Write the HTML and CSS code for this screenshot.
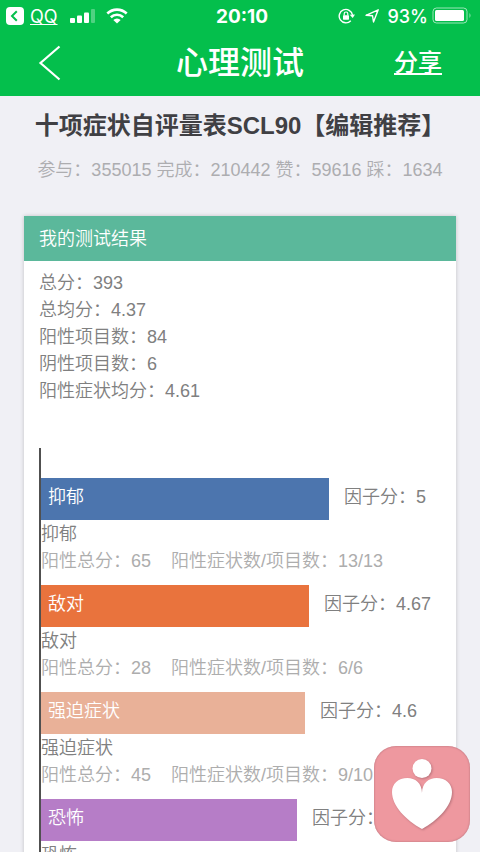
FILE: index.html
```html
<!DOCTYPE html>
<html lang="zh-CN">
<head>
<meta charset="utf-8">
<meta name="viewport" content="width=device-width, initial-scale=1">
<title>心理测试</title>
<link rel="stylesheet" href="styles.css">
</head>
<body>
<header class="top">
  <div class="status">
    <div class="status-side">
      <svg class="back-app" width="18" height="18" viewBox="0 0 18 18" aria-hidden="true"><rect width="18" height="18" rx="4" fill="#fff"/><path d="M10.800 4.200 6 9l4.800 4.800" fill="none" stroke="#04bf4c" stroke-width="2"/></svg>
      <a class="app-link" href="#">QQ</a>
      <svg class="signal" width="26" height="14" viewBox="0 0 26 14" aria-hidden="true"><g fill="#fff"><rect x="0" y="9" width="5" height="5" rx="1"/><rect x="7" y="6.500" width="5" height="7.500" rx="1"/><rect x="14" y="3.500" width="5" height="10.500" rx="1"/><rect x="21" y="0" width="4" height="14" rx="1" opacity=".3"/></g></svg>
      <svg width="22" height="16" viewBox="0 0 22 16" aria-hidden="true"><g fill="none" stroke="#fff" stroke-width="2.600"><path d="M1.300 5.500a14 14 0 0 1 19.400 0"/><path d="M4.800 9.200a9 9 0 0 1 12.400 0"/></g><path d="M11 15.500 7.300 11.900a5.300 5.300 0 0 1 7.400 0z" fill="#fff"/></svg>
    </div>
    <time class="clock">20:10</time>
    <div class="status-side status-right">
      <svg width="18" height="16" viewBox="0 0 18 16" aria-hidden="true"><path d="M12.800 12.700A6.700 6.700 0 1 1 14.500 7" fill="none" stroke="#fff" stroke-width="1.400"/><path d="m11.700 6.800 5.300-.300-2.300 3.500z" fill="#fff"/><rect x="5" y="7.200" width="6" height="4.500" rx=".6" fill="#fff"/><path d="M6.200 7.500V5.800a1.800 1.800 0 0 1 3.600 0v1.700" fill="none" stroke="#fff" stroke-width="1.200"/></svg>
      <svg class="locate" width="14" height="14" viewBox="0 0 14 14" aria-hidden="true"><path d="M13.200.800 8.500 13 7.500 6.700 1 6.300z" fill="none" stroke="#fff" stroke-width="1.400" stroke-linejoin="round"/></svg>
      <span class="percent">93%</span>
      <svg width="40" height="18" viewBox="0 0 40 18" aria-hidden="true"><rect x="1" y="1" width="34" height="15" rx="3.500" fill="none" stroke="#fff" stroke-opacity=".6"/><rect x="3" y="3" width="29" height="11" rx="1.500" fill="#fff"/><path d="M37.500 6q2 2.500 0 5z" fill="#fff" opacity=".6"/></svg>
    </div>
  </div>
  <nav class="nav">
    <button class="back" type="button" aria-label="返回"><svg width="24" height="38" viewBox="0 0 24 38" aria-hidden="true"><path d="M21.500 2.500 2.500 19l19 16.500" fill="none" stroke="#fff" stroke-width="2.200"/></svg></button>
    <h1 class="nav-title">心理测试</h1>
    <a class="share" href="#">分享</a>
  </nav>
</header>
<main class="page">
  <h2 class="title">十项症状自评量表SCL90【编辑推荐】</h2>
  <p class="meta">参与：355015 完成：210442 赞：59616 踩：1634</p>
  <section class="card">
    <h3 class="card-head">我的测试结果</h3>
    <div class="card-body">
      <ul class="summary">
        <li>总分：393</li>
        <li>总均分：4.37</li>
        <li>阳性项目数：84</li>
        <li>阴性项目数：6</li>
        <li>阳性症状均分：4.61</li>
      </ul>
      <div class="chart">
        <article class="factor">
          <div class="bar-row"><div class="bar blue" style="width:72%">抑郁</div><span class="score">因子分：5</span></div>
          <h4 class="name">抑郁</h4>
          <p class="detail"><span>阳性总分：65</span><span>阳性症状数/项目数：13/13</span></p>
        </article>
        <article class="factor">
          <div class="bar-row"><div class="bar orange" style="width:67%">敌对</div><span class="score">因子分：4.67</span></div>
          <h4 class="name">敌对</h4>
          <p class="detail"><span>阳性总分：28</span><span>阳性症状数/项目数：6/6</span></p>
        </article>
        <article class="factor">
          <div class="bar-row"><div class="bar peach" style="width:66%">强迫症状</div><span class="score">因子分：4.6</span></div>
          <h4 class="name">强迫症状</h4>
          <p class="detail"><span>阳性总分：45</span><span>阳性症状数/项目数：9/10</span></p>
        </article>
        <article class="factor">
          <div class="bar-row"><div class="bar purple" style="width:64%">恐怖</div><span class="score">因子分：</span></div>
          <h4 class="name">恐怖</h4>
        </article>
      </div>
    </div>
  </section>
</main>
<button class="heart" type="button" aria-label="心理">
  <svg viewBox="0 0 96 96" aria-hidden="true"><g fill="#fff"><circle cx="48" cy="22.500" r="9.500"/><path d="M48 47C48 37 41 32 33.500 32 24 32 18 38 18 46c0 14 14 28 30 37 16-9 30-23 30-37 0-8-6-14-15.500-14C55 32 48 37 48 47z"/></g></svg>
</button>
</body>
</html>
```
FILE: styles.css
```css
* {
  box-sizing: border-box;
  margin: 0;
  padding: 0;
}

body {
  display: flex;
  flex-direction: column;
  height: 100vh;
  overflow: hidden;
  background: #f0f0f5;
  color: #808080;
  font: 350 18px/27px "Liberation Sans", "Noto Sans CJK SC", sans-serif;
}

button {
  border: 0;
  background: none;
  cursor: pointer;
}

svg {
  display: block;
}

.top {
  flex: none;
  background: #04bf4c;
  color: #fff;
}

.status {
  display: grid;
  grid-template-columns: 1fr auto 1fr;
  align-items: center;
  height: 32px;
  padding: 0 8px 0 6px;
  font-family: Inter, sans-serif;
}

.status-side {
  display: flex;
  align-items: center;
}

.status-right {
  justify-content: flex-end;
}

.app-link {
  margin: 0 12px 0 6px;
  color: inherit;
  font: 400 18px/27px Inter, sans-serif;
  text-decoration-skip-ink: none;
}

.signal {
  margin-right: 10px;
}

.clock {
  padding-left: 6px;
  font-size: 19px;
  font-weight: 700;
}

.locate {
  margin: 0 9px;
}

.percent {
  margin-right: 4px;
  font-weight: 500;
}

.nav {
  display: grid;
  grid-template-columns: 1fr auto 1fr;
  align-items: center;
  height: 64px;
  padding: 0 38px 3px;
}

.back {
  justify-self: start;
}

.nav-title {
  font-size: 32px;
  font-weight: 500;
  line-height: 48px;
}

.share {
  justify-self: end;
  color: inherit;
  font-size: 24px;
  font-weight: 500;
  line-height: 36px;
}

.page {
  flex: 1;
  min-height: 0;
  padding: 12px 24px 0;
  overflow-y: auto;
  scrollbar-width: none;
}

.title {
  margin: 0 -24px;
  color: #404044;
  font-size: 24px;
  font-weight: 700;
  line-height: 36px;
  text-align: center;
  white-space: nowrap;
}

.meta {
  margin: 13px 0 32px;
  color: #adadb0;
  text-align: center;
}

.card {
  background: #fff;
  box-shadow: 0 0 4px rgba(0, 0, 0, 0.2);
}

.card-head {
  padding: 10px 15px 8px;
  background: #5bb89b;
  color: #fff;
  font-size: 18px;
  font-weight: 350;
}

.card-body {
  padding: 9px 15px 30px;
}

.summary {
  list-style: none;
}

.chart {
  margin-top: 43px;
  padding-top: 30px;
  border-left: 2px solid #505050;
}

.factor {
  padding-bottom: 10px;
}

.bar-row {
  display: flex;
  gap: 15px;
  margin-bottom: 1px;
  white-space: nowrap;
}

.bar {
  flex: none;
  height: 42px;
  padding: 6px 7px;
  color: #fff;
}

.blue {
  background: #4c75ae;
}

.orange {
  background: #e9733d;
}

.peach {
  background: #e9b198;
}

.purple {
  background: #b67dc7;
}

.score {
  padding-top: 6px;
}

.name {
  font-size: 18px;
  font-weight: 350;
}

.detail {
  display: flex;
  gap: 20px;
  color: #adadad;
}

.heart {
  position: fixed;
  right: 10px;
  bottom: 10px;
  width: 96px;
  height: 96px;
  border-radius: 22px;
  background: #ee989f;
  box-shadow: inset 0 0 2px #a96670;
}

.heart svg {
  filter: drop-shadow(1px 1px 1px #b9747c);
}
```
